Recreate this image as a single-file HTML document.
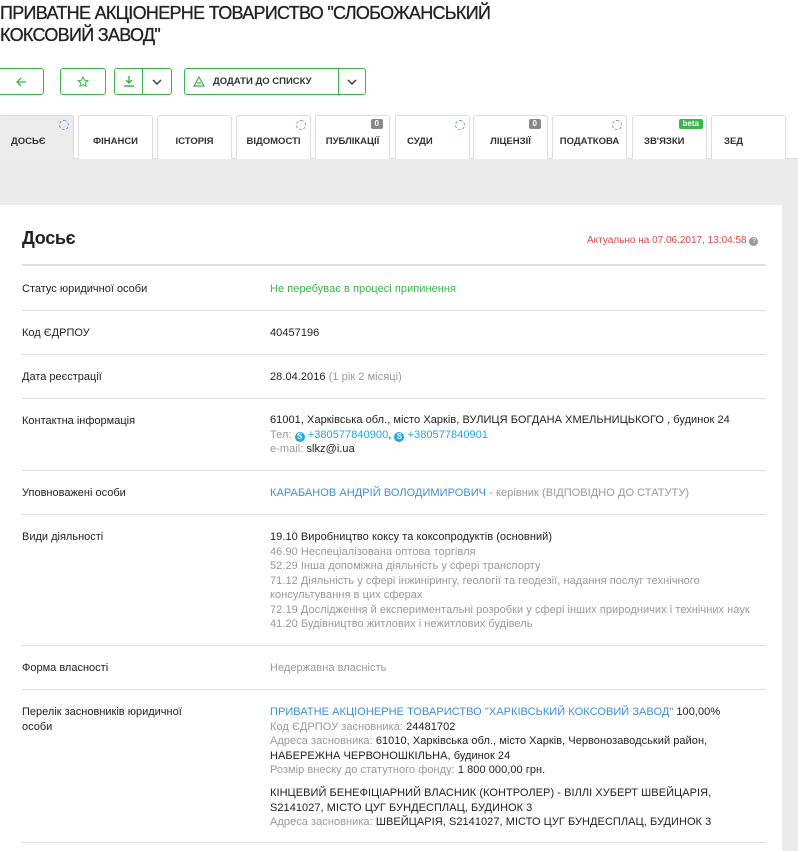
<!DOCTYPE html>
<html><head><meta charset="utf-8">
<style>
*{margin:0;padding:0;box-sizing:border-box}
body{width:798px;height:851px;overflow:hidden;background:#fff;font-family:"Liberation Sans",Arial,sans-serif;color:#222;position:relative}
.a{position:absolute;white-space:nowrap}
h1{position:absolute;left:0;top:2px;font-size:18px;font-weight:normal;line-height:22px;color:#222;letter-spacing:-0.7px;-webkit-text-stroke:0.3px #222}
.btn{position:absolute;top:68px;height:27px;border:1px solid #3bb54a;border-radius:3px;background:#fff;color:#3bb54a;display:flex;align-items:center;justify-content:center}
.tabs{position:absolute;top:115px;left:0;width:798px;height:44px}
.tab{position:absolute;top:0;height:44px;width:75px;border:1px solid #ddd;border-bottom:none;border-radius:3px 3px 0 0;background:#fff;font-size:9.5px;font-weight:bold;color:#333;padding:20px 0 0 0;text-align:center}
.circ{position:absolute;right:4px;top:4px;width:10px;height:10px;border:1px dashed #5a9fd6;border-radius:50%}
.bdg{position:absolute;right:6px;top:3px;background:#888;color:#fff;font-size:8px;padding:0 4px;border-radius:2px;line-height:10px}
.gray{position:absolute;top:158px;left:0;width:798px;height:693px;background:#ebebeb;border-top:1px solid #ddd}
.card{position:absolute;top:205px;left:0;width:782px;height:646px;background:#fff}
.hr{position:absolute;left:22px;width:744px;height:1px;background:#ddd}
.lab{position:absolute;left:22px;font-size:11px;color:#222;line-height:14.5px}
.val{position:absolute;left:270px;font-size:11px;color:#222;line-height:14.5px;white-space:nowrap;letter-spacing:0.05px}
.g{color:#999}.b{color:#3d8fd6}.gr{color:#3bb54a}.sk{color:#1ea7e1}
.sky{display:inline-block;width:10px;height:10px;border-radius:50%;background:#1ea7e1;color:#fff;font-size:8px;line-height:10px;text-align:center;font-weight:bold;vertical-align:-1px}
</style></head><body>
<h1>ПРИВАТНЕ АКЦІОНЕРНЕ ТОВАРИСТВО "СЛОБОЖАНСЬКИЙ<br>КОКСОВИЙ ЗАВОД"</h1>

<div class="btn" style="left:-3px;width:47px"><svg width="12" height="12" viewBox="0 0 12 12"><path d="M11 6H2M6 2L2 6l4 4" stroke="#3bb54a" stroke-width="1.3" fill="none"/></svg></div>
<div class="btn" style="left:60px;width:46px"><svg width="12" height="12" viewBox="0 0 12 12"><path d="M6 1l1.5 3.2 3.4.4-2.5 2.3.7 3.4L6 8.6 2.9 10.3l.7-3.4L1.1 4.6l3.4-.4z" stroke="#3bb54a" stroke-width="1" fill="none"/></svg></div>
<div class="btn" style="left:114px;width:58px;justify-content:flex-start"><div style="width:28px;height:25px;border-right:1px solid #3bb54a;display:flex;align-items:center;justify-content:center"><svg width="12" height="13" viewBox="0 0 12 13"><path d="M6 1v7M3 5l3 3 3-3M1 11h10" stroke="#3bb54a" stroke-width="1.4" fill="none"/></svg></div><div style="width:28px;display:flex;justify-content:center"><svg width="10" height="6" viewBox="0 0 10 6"><path d="M1 1l4 4 4-4" stroke="#444" stroke-width="1.5" fill="none"/></svg></div></div>
<div class="btn" style="left:184px;width:182px;justify-content:flex-start"><div style="width:154px;height:25px;border-right:1px solid #3bb54a;display:flex;align-items:center;padding-left:8px;font-size:9.5px;color:#333;font-weight:bold"><svg width="12" height="11" viewBox="0 0 12 11" style="margin-right:8px"><path d="M6 1L11 10H1z M4 7h4" stroke="#3bb54a" stroke-width="1.2" fill="none"/></svg>ДОДАТИ ДО СПИСКУ</div><div style="width:26px;display:flex;justify-content:center"><svg width="10" height="6" viewBox="0 0 10 6"><path d="M1 1l4 4 4-4" stroke="#444" stroke-width="1.5" fill="none"/></svg></div></div>

<div class="gray"></div>
<div class="tabs">
<div class="tab" style="left:-2px;width:76px;background:#ececec;height:44px;text-align:left;padding-left:12px">ДОСЬЄ<span class="circ"></span></div>
<div class="tab" style="left:78px">ФІНАНСИ</div>
<div class="tab" style="left:157px">ІСТОРІЯ</div>
<div class="tab" style="left:236px">ВІДОМОСТІ<span class="circ"></span></div>
<div class="tab" style="left:315px">ПУБЛІКАЦІЇ<span class="bdg">0</span></div>
<div class="tab" style="left:395px;text-align:left;padding-left:11px">СУДИ<span class="circ"></span></div>
<div class="tab" style="left:473px">ЛІЦЕНЗІЇ<span class="bdg">0</span></div>
<div class="tab" style="left:552px">ПОДАТКОВА<span class="circ"></span></div>
<div class="tab" style="left:632px;text-align:left;padding-left:11px">ЗВ'ЯЗКИ<span class="bdg" style="background:#3bb54a;right:3px">beta</span></div>
<div class="tab" style="left:711px;text-align:left;padding-left:12px">ЗЕД</div>
</div>

<div class="card"></div>
<div class="a" style="left:22px;top:228px;font-size:18px;font-weight:bold;color:#222;letter-spacing:-0.3px">Досьє</div>
<div class="a" style="left:587px;top:235px;font-size:10px;color:#e0474c">Актуально на 07.06.2017, 13:04:58 <span style="display:inline-block;width:9px;height:9px;border-radius:50%;background:#999;color:#fff;font-size:7px;text-align:center;line-height:9px;vertical-align:0">?</span></div>
<div class="hr" style="top:264px;height:2px"></div>

<div class="lab" style="top:282px">Статус юридичної особи</div>
<div class="val gr" style="top:282px">Не перебуває в процесі припинення</div>
<div class="hr" style="top:310px"></div>

<div class="lab" style="top:326px">Код ЄДРПОУ</div>
<div class="val" style="top:326px">40457196</div>
<div class="hr" style="top:354px"></div>

<div class="lab" style="top:370px">Дата реєстрації</div>
<div class="val" style="top:370px">28.04.2016 <span class="g">(1 рік 2 місяці)</span></div>
<div class="hr" style="top:398px"></div>

<div class="lab" style="top:414px">Контактна інформація</div>
<div class="val" style="top:413px">61001, Харківська обл., місто Харків, ВУЛИЦЯ БОГДАНА ХМЕЛЬНИЦЬКОГО , будинок 24<br><span class="g">Тел:</span> <span class="sky">S</span> <span class="sk">+380577840900</span>, <span class="sky">S</span> <span class="sk">+380577840901</span><br><span class="g">e-mail:</span> slkz@i.ua</div>
<div class="hr" style="top:470px"></div>

<div class="lab" style="top:486px">Уповноважені особи</div>
<div class="val" style="top:486px"><span class="b">КАРАБАНОВ АНДРІЙ ВОЛОДИМИРОВИЧ</span><span class="g"> - керівник (ВІДПОВІДНО ДО СТАТУТУ)</span></div>
<div class="hr" style="top:514px"></div>

<div class="lab" style="top:530px">Види діяльності</div>
<div class="val" style="top:530px">19.10 Виробництво коксу та коксопродуктів (основний)<br><span class="g">46.90 Неспеціалізована оптова торгівля<br>52.29 Інша допоміжна діяльність у сфері транспорту<br>71.12 Діяльність у сфері інжинірингу, геології та геодезії, надання послуг технічного<br>консультування в цих сферах<br>72.19 Дослідження й експериментальні розробки у сфері інших природничих і технічних наук<br>41.20 Будівництво житлових і нежитлових будівель</span></div>
<div class="hr" style="top:645px"></div>

<div class="lab" style="top:661px">Форма власності</div>
<div class="val g" style="top:661px">Недержавна власність</div>
<div class="hr" style="top:689px"></div>

<div class="lab" style="top:705px">Перелік засновників юридичної<br>особи</div>
<div class="val" style="top:705px"><span class="b">ПРИВАТНЕ АКЦІОНЕРНЕ ТОВАРИСТВО "ХАРКІВСЬКИЙ КОКСОВИЙ ЗАВОД"</span> 100,00%<br><span class="g">Код ЄДРПОУ засновника:</span> 24481702<br><span class="g">Адреса засновника:</span> 61010, Харківська обл., місто Харків, Червонозаводський район,<br>НАБЕРЕЖНА ЧЕРВОНОШКІЛЬНА, будинок 24<br><span class="g">Розмір внеску до статутного фонду:</span> 1 800 000,00 грн.</div>
<div class="val" style="top:786px">КІНЦЕВИЙ БЕНЕФІЦІАРНИЙ ВЛАСНИК (КОНТРОЛЕР) - ВІЛЛІ ХУБЕРТ ШВЕЙЦАРІЯ,<br>S2141027, МІСТО ЦУГ БУНДЕСПЛАЦ, БУДИНОК 3<br><span class="g">Адреса засновника:</span> ШВЕЙЦАРІЯ, S2141027, МІСТО ЦУГ БУНДЕСПЛАЦ, БУДИНОК 3</div>
<div class="hr" style="top:842px"></div>
</body></html>
